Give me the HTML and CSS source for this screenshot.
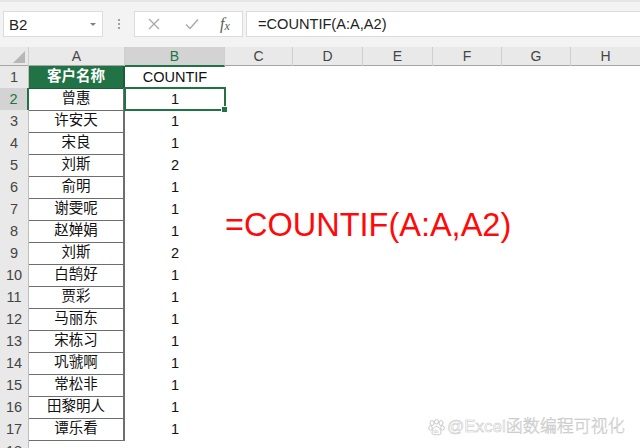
FILE: index.html
```html
<!DOCTYPE html>
<html>
<head>
<meta charset="utf-8">
<link rel="stylesheet" href="styles.css">
</head>
<body>
<div class="app">
  <div class="toolbar">
    <div class="namebox"><span>B2</span><span class="caret"></span></div>
    <div class="grip"><i></i><i></i><i></i></div>
    <div class="fbtns">
      <svg class="ic" width="14" height="14" viewBox="0 0 14 14"><path d="M2 2L12 12M12 2L2 12" stroke="#a8a8a8" stroke-width="1.3" fill="none"/></svg>
      <svg class="ic" width="16" height="14" viewBox="0 0 16 14"><path d="M2 7.5L6 11.5L14 2.5" stroke="#a8a8a8" stroke-width="1.4" fill="none"/></svg>
      <span class="fx">f<sub>x</sub></span>
    </div>
    <div class="finput">=COUNTIF(A:A,A2)</div>
  </div>
  <div class="sheet">
    <div class="row head">
      <div class="corner"><span class="tri"></span></div>
      <div class="ch">A</div><div class="ch sel">B</div><div class="ch">C</div><div class="ch">D</div><div class="ch">E</div><div class="ch">F</div><div class="ch">G</div><div class="ch last">H</div>
    </div>
    <div class="row"><div class="rh">1</div><div class="a title">客户名称</div><div class="b">COUNTIF</div><div class="rest"></div></div>
    <div class="row"><div class="rh rsel">2</div><div class="a">曾惠</div><div class="b active">1<span class="handle"></span></div><div class="rest"></div></div>
    <div class="row"><div class="rh">3</div><div class="a">许安天</div><div class="b">1</div><div class="rest"></div></div>
    <div class="row"><div class="rh">4</div><div class="a">宋良</div><div class="b">1</div><div class="rest"></div></div>
    <div class="row"><div class="rh">5</div><div class="a">刘斯</div><div class="b">2</div><div class="rest"></div></div>
    <div class="row"><div class="rh">6</div><div class="a">俞明</div><div class="b">1</div><div class="rest"></div></div>
    <div class="row"><div class="rh">7</div><div class="a">谢雯呢</div><div class="b">1</div><div class="rest"></div></div>
    <div class="row"><div class="rh">8</div><div class="a">赵婵娟</div><div class="b">1</div><div class="rest"></div></div>
    <div class="row"><div class="rh">9</div><div class="a">刘斯</div><div class="b">2</div><div class="rest"></div></div>
    <div class="row"><div class="rh">10</div><div class="a">白鹄好</div><div class="b">1</div><div class="rest"></div></div>
    <div class="row"><div class="rh">11</div><div class="a">贾彩</div><div class="b">1</div><div class="rest"></div></div>
    <div class="row"><div class="rh">12</div><div class="a">马丽东</div><div class="b">1</div><div class="rest"></div></div>
    <div class="row"><div class="rh">13</div><div class="a">宋栋习</div><div class="b">1</div><div class="rest"></div></div>
    <div class="row"><div class="rh">14</div><div class="a">巩虢啊</div><div class="b">1</div><div class="rest"></div></div>
    <div class="row"><div class="rh">15</div><div class="a">常松非</div><div class="b">1</div><div class="rest"></div></div>
    <div class="row"><div class="rh">16</div><div class="a">田黎明人</div><div class="b">1</div><div class="rest"></div></div>
    <div class="row"><div class="rh">17</div><div class="a lastA">谭乐看</div><div class="b">1</div><div class="rest"></div></div>
    <div class="row"><div class="rh">18</div><div class="e"></div><div class="b"></div><div class="rest"></div></div>
    <div class="bigformula">=COUNTIF(A:A,A2)</div>
    <div class="watermark">
      <svg width="17" height="17" viewBox="0 0 17 17"><g fill="#fff" stroke="#c2c2c2" stroke-width="0.9"><ellipse cx="4" cy="4" rx="2" ry="2.5"/><ellipse cx="8.5" cy="2.8" rx="2" ry="2.3"/><ellipse cx="13" cy="4" rx="2" ry="2.5"/><ellipse cx="2.5" cy="9" rx="1.8" ry="2.2"/><ellipse cx="14.5" cy="9" rx="1.8" ry="2.2"/><path d="M4 14C4 10 6.5 7.5 8.5 7.5S13 10 13 14C13 16 10 16 8.5 15.5C7 16 4 16 4 14Z"/></g><text x="5.6" y="14" font-size="4.5" fill="#c2c2c2" font-family="Liberation Sans, sans-serif">du</text></svg>
      <span>@Excel函数编程可视化</span>
    </div>
  </div>
</div>
</body>
</html>
```

FILE: styles.css
```css
html, body {
  margin: 0;
  padding: 0;
  background: #ffffff;
}
body {
  width: 640px;
  height: 448px;
  overflow: hidden;
  font-family: "Liberation Sans", "Noto Sans CJK SC", sans-serif;
}
.app {
  width: 640px;
  height: 448px;
  overflow: hidden;
}
.toolbar {
  height: 47px;
  box-sizing: border-box;
  background: #f3f3f3;
  border-top: 2px solid #e6e6e6;
  padding: 9px 0 0 3px;
  display: flex;
  align-items: flex-start;
}
.namebox {
  width: 100px;
  height: 26px;
  box-sizing: border-box;
  background: #fff;
  border: 1px solid #dcdcdc;
  display: flex;
  align-items: center;
  justify-content: space-between;
  padding: 0 6px 0 5px;
  font-size: 15px;
  color: #222;
}
.caret {
  width: 0;
  height: 0;
  border-left: 3px solid transparent;
  border-right: 3px solid transparent;
  border-top: 3px solid #808080;
}
.grip {
  width: 31px;
  height: 26px;
  display: flex;
  flex-direction: column;
  align-items: center;
  justify-content: center;
  gap: 2px;
}
.grip i {
  width: 2px;
  height: 2px;
  background: #a0a0a0;
}
.fbtns {
  width: 109px;
  height: 26px;
  box-sizing: border-box;
  background: #fff;
  border: 1px solid #dcdcdc;
  display: flex;
  align-items: center;
  padding-left: 12px;
  gap: 0;
}
.fbtns .ic:first-child { margin-right: 23px; }
.fbtns .ic:nth-child(2) { margin-right: 20px; }
.fx {
  font-family: "Liberation Serif", serif;
  font-style: italic;
  font-size: 16px;
  color: #5a5a5a;
  line-height: 1;
}
.fx sub {
  font-size: 12px;
  vertical-align: -1px;
}
.finput {
  margin-left: 3px;
  flex: 1;
  height: 26px;
  box-sizing: border-box;
  background: #fff;
  border: 1px solid #dcdcdc;
  border-right: none;
  padding-left: 11px;
  font-size: 14.6px;
  line-height: 24px;
  color: #222;
}
.sheet {
  position: relative;
}
.row {
  display: grid;
  grid-template-columns: 29px 96px 100px 68px 70px 70px 69px 69px 69px;
  height: 22px;
}
.row.head {
  height: 19px;
  background: #e9e9e9;
  border-bottom: 1px solid #a5a5a5;
  box-sizing: border-box;
}
.corner {
  position: relative;
  border-right: 1px solid #cfcfcf;
}
.tri {
  position: absolute;
  right: 3px;
  bottom: 3px;
  width: 0;
  height: 0;
  border-left: 12px solid transparent;
  border-bottom: 12px solid #b7b7b7;
}
.ch {
  border-right: 1px solid #cfcfcf;
  text-align: center;
  font-size: 14px;
  line-height: 19px;
  color: #444;
}
.ch.sel {
  background: #d3d3d3;
  color: #217346;
  border-bottom: 2px solid #217346;
  margin-bottom: -1px;
  line-height: 18px;
}
.ch.last { border-right: none; }
.rh {
  background: #e9e9e9;
  border-right: 1px solid #bdbdbd;
  border-bottom: 1px solid #d2d2d2;
  box-sizing: border-box;
  text-align: center;
  font-size: 14.5px;
  line-height: 22px;
  color: #444;
}
.rh.rsel {
  background: #d3d3d3;
  color: #217346;
  border-right: 2px solid #217346;
}
.a {
  box-sizing: border-box;
  border-bottom: 1px solid #6e6e6e;
  border-right: 2px solid #6e6e6e;
  text-align: center;
  font-size: 14.5px;
  line-height: 21px;
  color: #111;
}
.a.title {
  background: #217346;
  color: #fff;
  font-weight: bold;
  border-color: #1a5e39;
}
.b {
  position: relative;
  box-sizing: border-box;
  text-align: center;
  font-size: 14.5px;
  line-height: 22px;
  color: #111;
}
.b.active {
  border: 2px solid #217346;
  margin: -1px 0 0 -1px;
  width: 102px;
  height: 24px;
  line-height: 20px;
}
.handle {
  position: absolute;
  right: -4px;
  bottom: -4px;
  width: 5px;
  height: 5px;
  background: #217346;
  border: 1px solid #fff;
}
.rest {
  grid-column: 4 / 10;
}
.bigformula {
  position: absolute;
  left: 225px;
  top: 156px;
  font-size: 32.5px;
  line-height: 44px;
  color: #ff0a0a;
  font-family: "Liberation Sans", "Noto Sans", sans-serif;
}
.watermark {
  position: absolute;
  left: 428px;
  top: 370px;
  display: flex;
  align-items: center;
  gap: 2px;
}
.watermark span {
  font-size: 17px;
  line-height: 20px;
  color: #fff;
  -webkit-text-stroke: 0.5px #c4c4c4;
  font-family: "Liberation Sans", "Noto Sans CJK SC", sans-serif;
  font-weight: 300;
}
```
